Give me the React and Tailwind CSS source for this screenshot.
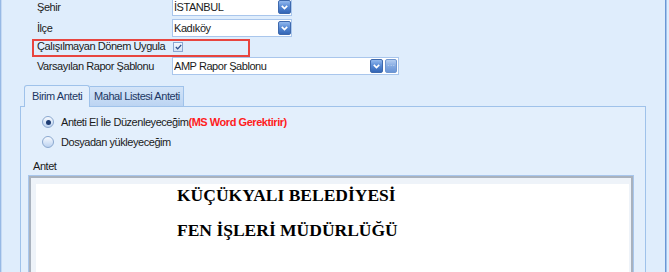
import React from "react";

function DropBtn() {
  return (
    <span className="flex h-[14px] w-[13px] items-center justify-center rounded-[2px] border border-[#3e69ad] bg-linear-to-b from-[#93b9ee] via-[#5487d3] to-[#3466b6]">
      <svg width="7" height="5" viewBox="0 0 7 5">
        <path d="M0.8 0.9 L3.5 3.6 L6.2 0.9" stroke="white" strokeWidth="1.7" fill="none" />
      </svg>
    </span>
  );
}

function MoreBtn() {
  return (
    <span className="ml-[2px] flex h-[14px] w-[12px] items-center justify-center rounded-[2px] border border-[#6f96cf] bg-linear-to-b from-[#b3cdf1] via-[#86abe2] to-[#6a95d6] text-[8px] leading-none tracking-normal text-[#cfe0f7]">
      ···
    </span>
  );
}

function Combo({ value, className, more }) {
  return (
    <div className={`flex h-[18px] items-center border border-[#a9c6ec] bg-white pl-[1px] ${className}`}>
      <span className="flex-1 truncate">{value}</span>
      <DropBtn />
      {more && <MoreBtn />}
    </div>
  );
}

function Radio({ checked }) {
  return (
    <span className="flex h-[12px] w-[12px] items-center justify-center rounded-full border border-[#8ba8cf] bg-linear-to-b from-[#f7faff] to-[#bcd2ef]">
      {checked && <span className="h-[5px] w-[5px] rounded-full bg-[#1d3c73]" />}
    </span>
  );
}

export default function App() {
  return (
    <div className="flex h-[272px] w-[669px] overflow-hidden bg-[#dfedfc] font-['Liberation_Sans',Arial,sans-serif] text-[11px] tracking-[-0.45px] text-[#1b1b1b]">
      <div className="w-px bg-[#97b9e5]" />
      <div className="w-px bg-[#c6daf3]" />

      <main className="min-w-0 flex-1">
        <div className="-mt-[2px] pl-[35px]">
          <div className="flex h-[18px] items-center">
            <span className="w-[135px]">Şehir</span>
            <Combo value="İSTANBUL" className="w-[120px]" />
          </div>
          <div className="mt-[3px] flex h-[18px] items-center">
            <span className="w-[135px]">İlçe</span>
            <Combo value="Kadıköy" className="w-[120px]" />
          </div>
          <div className="relative flex h-[19px] items-center">
            <span className="w-[135px]">Çalışılmayan Dönem Uygula</span>
            <span className="ml-px flex h-[10px] w-[10px] items-center justify-center border border-[#8aa6d1] bg-linear-to-b from-[#f4f8fe] to-[#d3e2f5]">
              <svg width="7" height="6" viewBox="0 0 7 6">
                <path d="M0.8 3 L2.7 4.8 L6.2 1" stroke="#2a4d8c" strokeWidth="1.2" fill="none" />
              </svg>
            </span>
            <div className="absolute -left-[5px] top-[2px] h-[18px] w-[218px] border-2 border-[#e8453f]" />
          </div>
          <div className="mt-px flex h-[18px] items-center">
            <span className="w-[135px]">Varsayılan Rapor Şablonu</span>
            <Combo value="AMP Rapor Şablonu" className="w-[227px] pr-px" more />
          </div>
        </div>

        <div className="mt-[10px] ml-[18px]">
          <div className="flex h-[21px] items-start pl-[4px] text-[#1c3763]">
            <div className="relative z-10 flex h-[22px] w-[66px] items-center rounded-t-[3px] border border-b-0 border-[#9fc2ea] bg-[#e3effc] pl-[7px]">
              Birim Anteti
            </div>
            <div className="mt-px flex h-[20px] w-[94px] items-center border border-b-0 border-l-0 border-[#9fc2ea] bg-linear-to-b from-[#d3e4f8] to-[#bcd4f2] pl-[4px]">
              Mahal Listesi Anteti
            </div>
          </div>

          <div className="h-[170px] w-[626px] border border-[#9fc2ea] bg-[#e3effc]">
            <div className="pt-[5px] pl-[21px]">
              <div className="flex h-[20px] items-center gap-[7px]">
                <Radio checked />
                <span>
                  Anteti El İle Düzenleyeceğim
                  <span className="font-bold text-[#ff1c1c]">(MS Word Gerektirir)</span>
                </span>
              </div>
              <div className="flex h-[20px] items-center gap-[7px]">
                <Radio />
                <span>Dosyadan yükleyeceğim</span>
              </div>
            </div>

            <div className="mt-[5px] flex h-[18px] items-center pl-[12px]">Antet</div>

            <div className="ml-[7px] mr-[11px] h-[120px] border border-[#a8c6ec]">
              <div className="h-full border-2 border-b-0 border-[#a9b2be] bg-[#eef3f9] pt-[6px] pr-[2px] pl-[5px]">
                <div className="h-full bg-white pt-[2px] pl-[141px] font-['Liberation_Serif','Times_New_Roman',serif] text-[17.5px] font-bold tracking-normal text-black">
                  <p className="leading-[18px]">KÜÇÜKYALI BELEDİYESİ</p>
                  <p className="mt-[17px] leading-[18px]">FEN İŞLERİ MÜDÜRLÜĞÜ</p>
                </div>
              </div>
            </div>
          </div>
        </div>
      </main>

      <div className="w-px bg-[#6a97d5]" />
      <div className="w-px bg-[#a3c3ec]" />
      <div className="w-[2px] bg-[#dfedfc]" />
    </div>
  );
}
